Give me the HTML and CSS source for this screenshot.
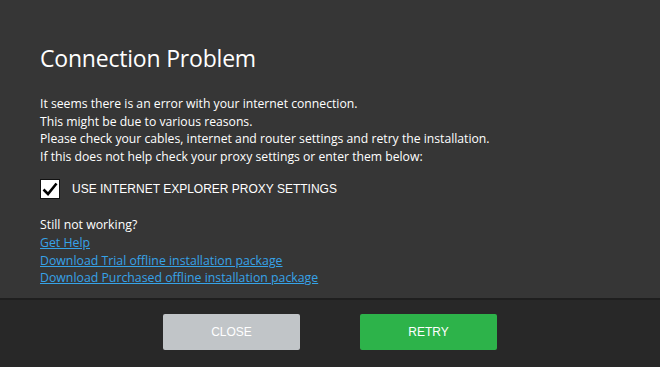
FILE: index.html
```html
<!DOCTYPE html>
<html>
<head>
<meta charset="utf-8">
<link rel="stylesheet" href="styles.css">
</head>
<body>
<div class="dialog">
  <main class="content">
    <h1 class="title">Connection Problem</h1>
    <p class="message">It seems there is an error with your internet connection.<br>This might be due to various reasons.<br>Please check your cables, internet and router settings and retry the installation.<br>If this does not help check your proxy settings or enter them below:</p>
    <label class="check">
      <span class="box"><svg width="16" height="14" viewBox="0 0 16 14"><path d="M1.5 7.5 L6 12 L14.5 1.5" fill="none" stroke="#000" stroke-width="2.6"/></svg></span>
      <span class="check-label">USE INTERNET EXPLORER PROXY SETTINGS</span>
    </label>
    <div class="help">
      <div>Still not working?</div>
      <a href="#">Get Help</a>
      <a href="#">Download Trial offline installation package</a>
      <a href="#">Download Purchased offline installation package</a>
    </div>
  </main>
  <footer class="footer">
    <button class="btn btn-close">CLOSE</button>
    <button class="btn btn-retry">RETRY</button>
  </footer>
</div>
</body>
</html>
```
FILE: styles.css
```css
html, body { margin: 0; padding: 0; }
body { width: 660px; height: 367px; background: #363636; font-family: "Open Sans", "Noto Sans", sans-serif; color: #fff; overflow: hidden; }
.dialog { display: flex; flex-direction: column; height: 367px; }
.content { flex: 1; padding: 42px 40px 0 40px; }
.title { margin: 0; font-weight: 400; font-size: 23px; line-height: 32px; letter-spacing: -0.2px; }
.message { margin: 21px 0 0 0; font-size: 12.2px; line-height: 17.6px; }
.check { display: flex; align-items: center; margin-top: 14px; }
.box { width: 18px; height: 18px; background: #fff; border: 1px solid #111; display: flex; align-items: center; justify-content: center; }
.check-label { margin-left: 12px; font-family: "Liberation Sans", Arial, sans-serif; font-size: 12px; }
.help { margin-top: 17px; display: flex; flex-direction: column; align-items: flex-start; font-size: 12.3px; line-height: 17.6px; }
.help a { color: #36a3e8; }
.footer { height: 69px; background: #282828; border-top: 2px solid #1f1f1f; display: flex; justify-content: center; align-items: flex-start; padding-top: 14px; gap: 60px; box-sizing: border-box; }
.btn { width: 137px; height: 36px; border: none; border-radius: 2px; color: #fff; font-family: "Liberation Sans", Arial, sans-serif; font-size: 12px; cursor: pointer; }
.btn-close { background: #c1c5c8; }
.btn-retry { background: #2db34a; }
```
